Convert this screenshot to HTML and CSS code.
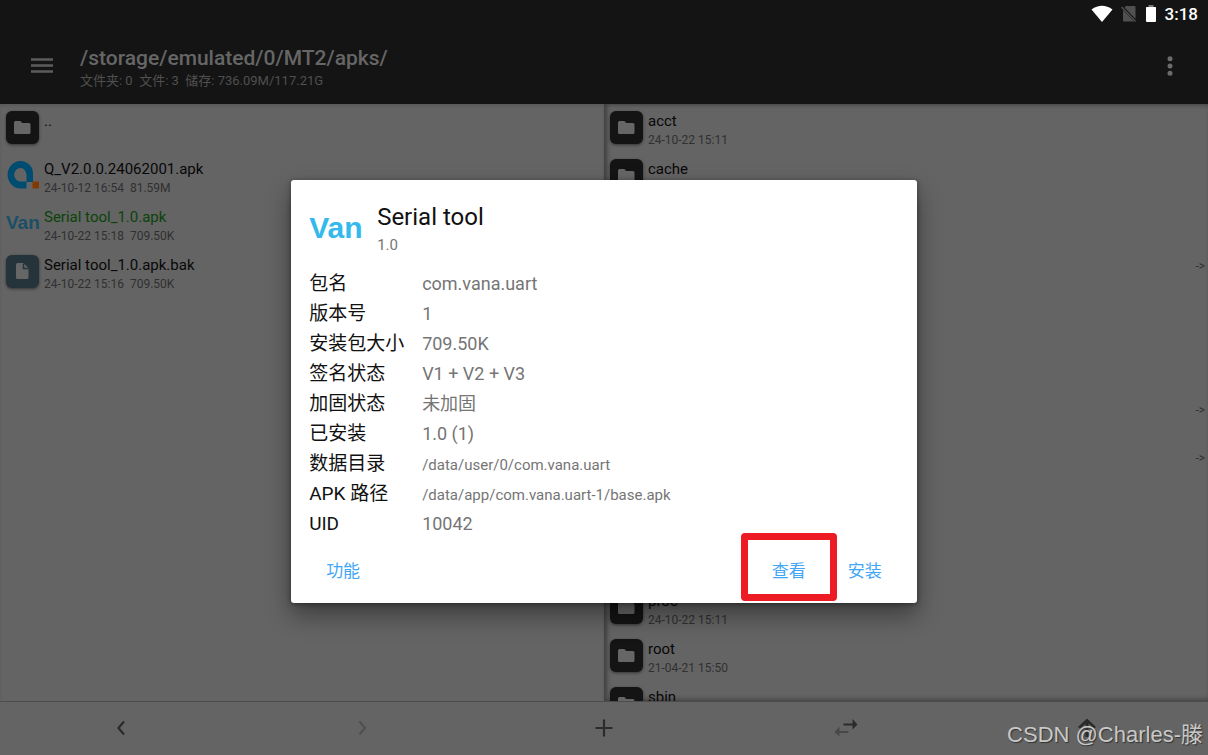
FILE: index.html
```html
<!DOCTYPE html>
<html lang="zh-CN">
<head>
<meta charset="utf-8">
<title>/storage/emulated/0/MT2/apks/</title>
<link rel="stylesheet" href="styles.css">
</head>
<body>
<svg class="defs" width="0" height="0" aria-hidden="true">
  <symbol id="folder" viewBox="0 0 33 33"><path d="M9.500 10h5l1.500 2h7q1.500 0 1.500 1.500v8q0 1.500-1.500 1.500h-13.500q-1.500 0-1.500-1.500v-10q0-1.500 1.500-1.500z" fill="currentColor"/></symbol>
</svg>
<div class="app">
  <header class="top">
    <div class="status">
      <svg width="22" height="18" viewBox="0 0 22 18"><path d="M.500 4.500Q11-3 21.500 4.500L11 17z" fill="#fff"/></svg>
      <svg width="16" height="18" viewBox="0 0 16 18"><path d="M5 1h8.500q1 0 1 1v12L3.500 2.500zM2 5l11 11.500H3q-1 0-1-1z" fill="#505050"/><path d="M.500 2l14 14.500" stroke="#505050" stroke-width="1.500"/></svg>
      <svg width="12" height="18" viewBox="0 0 12 18"><path d="M3.500 0h5v2h-5z" fill="#777"/><path d="M1.500 2h9q.500 0 .500.500V16q0 1-1 1H2q-1 0-1-1V2.500q0-.500.500-.500z" fill="#fff"/></svg>
      <time>3:18</time>
    </div>
    <div class="toolbar">
      <button class="icon-btn" aria-label="菜单"><svg width="24" height="18" viewBox="0 0 24 18"><path d="M1 2.500h22M1 8.500h22M1 14.500h22" stroke="#5c5c5c" stroke-width="2.300"/></svg></button>
      <div class="heading">
        <h1>/storage/emulated/0/MT2/apks/</h1>
        <p>文件夹: 0&nbsp; 文件: 3&nbsp; 储存: 736.09M/117.21G</p>
      </div>
      <button class="icon-btn" aria-label="更多"><svg width="6" height="20" viewBox="0 0 6 20"><g fill="#6b6b6b"><circle cx="3" cy="2.700" r="2.500"/><circle cx="3" cy="10" r="2.500"/><circle cx="3" cy="17.300" r="2.500"/></g></svg></button>
    </div>
  </header>

  <main class="panes">
    <ul class="pane">
      <li class="row"><svg class="tile"><use href="#folder"/></svg><div class="file"><span class="name">..</span></div></li>
      <li class="row"><svg class="logo" viewBox="0 1 33 33"><path fill-rule="evenodd" d="M14.500 3A12.500 13.300 0 0 0 14.500 30.500H20.500V24H27V16A12.500 12.500 0 0 0 14.500 3zM14.500 10a6.200 6.800 0 0 1 6 7v6.500h-6A6.200 6.600 0 0 1 14.500 10z" fill="#004c70"/><path d="M26.500 23.500h6.500v7h-6.500z" fill="#803a00"/></svg><div class="file"><span class="name">Q_V2.0.0.24062001.apk</span><span class="meta">24-10-12 16:54&nbsp; 81.59M</span></div></li>
      <li class="row"><span class="van">Van</span><div class="file"><span class="name installed">Serial tool_1.0.apk</span><span class="meta">24-10-22 15:18&nbsp; 709.50K</span></div></li>
      <li class="row"><svg class="tile doc" viewBox="0 0 33 33"><path d="M11.500 8h6l5 5v9.500q0 1.500-1.500 1.500h-9.500q-1.500 0-1.500-1.500v-13q0-1.500 1.500-1.500z" fill="#666"/><path d="M17.500 8.500v5h5" fill="none" stroke="#25333a" stroke-width="1.500"/></svg><div class="file"><span class="name">Serial tool_1.0.apk.bak</span><span class="meta">24-10-22 15:16&nbsp; 709.50K</span></div></li>
    </ul>
    <ul class="pane pane-front">
      <li class="row"><svg class="tile"><use href="#folder"/></svg><div class="file"><span class="name">acct</span><span class="meta">24-10-22 15:11</span></div></li>
      <li class="row"><svg class="tile"><use href="#folder"/></svg><div class="file"><span class="name">cache</span></div></li>
      <li class="row"></li>
      <li class="row link"><span>-&gt;</span></li>
      <li class="row"></li>
      <li class="row"></li>
      <li class="row link"><span>-&gt;</span></li>
      <li class="row link"><span>-&gt;</span></li>
      <li class="row"></li>
      <li class="row"></li>
      <li class="row"><svg class="tile"><use href="#folder"/></svg><div class="file"><span class="name">proc</span><span class="meta">24-10-22 15:11</span></div></li>
      <li class="row"><svg class="tile"><use href="#folder"/></svg><div class="file"><span class="name">root</span><span class="meta">21-04-21 15:50</span></div></li>
      <li class="row"><svg class="tile"><use href="#folder"/></svg><div class="file"><span class="name">sbin</span></div></li>
    </ul>
  </main>

  <nav class="bottom">
    <button aria-label="后退"><svg viewBox="0 0 24 24"><path d="M15 5.500L9.500 12l5.500 6.500" fill="none" stroke="#2b2b2b" stroke-width="2.200"/></svg></button>
    <button aria-label="前进"><svg viewBox="0 0 24 24"><path d="M9.500 5.500L15 12l-5.500 6.500" fill="none" stroke="#505050" stroke-width="2.200"/></svg></button>
    <button aria-label="新建"><svg viewBox="0 0 24 24"><path d="M12 3.500v17M3.500 12h17" stroke="#2b2b2b" stroke-width="2.200"/></svg></button>
    <button aria-label="交换"><svg viewBox="0 0 24 24"><path d="M9.500 7.500h9V3l5 5.500-5 5V9.500h-9z" fill="#2b2b2b"/><path d="M14.500 15h-9v-4.500L.500 16l5 4.500V17h9z" fill="#484848"/></svg></button>
    <button aria-label="上级"><svg viewBox="0 0 24 24"><path d="M12 2.500l9 8.500-2 1.500-5.500-5V21h-3V8L5 12.500 3 11z" fill="#2b2b2b"/></svg></button>
  </nav>

  <div class="overlay">
    <section class="dialog" role="dialog" aria-labelledby="app-name">
      <header class="dialog-head">
        <span class="van van-large">Van</span>
        <div><h2 id="app-name">Serial tool</h2><p>1.0</p></div>
      </header>
      <table>
        <tr><th scope="row">包名</th><td>com.vana.uart</td></tr>
        <tr><th scope="row">版本号</th><td>1</td></tr>
        <tr><th scope="row">安装包大小</th><td>709.50K</td></tr>
        <tr><th scope="row">签名状态</th><td>V1 + V2 + V3</td></tr>
        <tr><th scope="row">加固状态</th><td>未加固</td></tr>
        <tr><th scope="row">已安装</th><td>1.0 (1)</td></tr>
        <tr><th scope="row">数据目录</th><td class="path">/data/user/0/com.vana.uart</td></tr>
        <tr><th scope="row">APK 路径</th><td class="path">/data/app/com.vana.uart-1/base.apk</td></tr>
        <tr><th scope="row">UID</th><td>10042</td></tr>
      </table>
      <footer class="actions">
        <button class="first">功能</button>
        <button class="marked">查看</button>
        <button>安装</button>
      </footer>
    </section>
  </div>
  <div class="watermark">CSDN @Charles-滕</div>
</div>
</body>
</html>
```
FILE: styles.css
```css
* { box-sizing: border-box; margin: 0; padding: 0; }
body { font-family: Roboto, "Noto Sans CJK SC", sans-serif; background: #646464; color: #080808; }
button { border: 0; background: none; font: inherit; color: inherit; }
svg { display: block; flex: none; }
ul { list-style: none; }
.defs { position: absolute; }
.app { position: relative; height: 100vh; display: flex; flex-direction: column; overflow: hidden; }

.top { background: #141414; }
.status { height: 28px; padding: 0 10px; display: flex; align-items: center; justify-content: flex-end; gap: 8px; color: #fff; }
.status time { font-size: 17px; font-weight: 500; line-height: 30px; }
.toolbar { height: 76px; padding: 0 26px 0 18px; display: flex; align-items: center; }
.icon-btn { width: 48px; height: 48px; display: flex; align-items: center; justify-content: center; }
.icon-btn:last-child { width: 24px; }
.heading { flex: 1; padding: 4px 0 0 14px; }
.heading h1 { font-size: 21px; font-weight: 500; line-height: 26px; color: #666; }
.heading p { font-size: 13px; line-height: 20px; color: #505050; }

.panes { flex: 1; min-height: 0; display: grid; grid-template-columns: 1fr 1fr; }
.pane { min-height: 0; overflow: hidden; box-shadow: inset 0 2px 2px #5a5a5a; }
.pane-front { box-shadow: inset 4px 2px 4px -1px #404040, inset 0 -4px 4px -2px #454545; }
.row { height: 48px; padding: 0 6px 2px; display: flex; align-items: center; gap: 5px; }
.tile, .logo { width: 33px; height: 33px; }
.tile { border-radius: 6px; background: #141414; color: #666; box-shadow: 0 1px 3px #333; }
.tile.doc { background: #25333a; }
.file { align-self: flex-start; padding-top: 6px; display: flex; flex-direction: column; }
.name { font-size: 15px; line-height: 22px; }
.meta { font-size: 12px; line-height: 16px; color: #303030; }
.installed { color: #0b430b; }
.link { padding: 0 3px 12px; justify-content: flex-end; font-size: 12px; color: #303030; }
.van { width: 33px; font-family: "Liberation Sans", sans-serif; font-size: 19px; font-weight: bold; line-height: 24px; color: #1a4f66; }

.bottom { height: 54px; padding-bottom: 2px; display: grid; grid-template-columns: repeat(5, 1fr); border-top: 1px solid #4c4c4c; }
.bottom button { display: flex; align-items: center; justify-content: center; }
.bottom svg { width: 24px; height: 24px; }

.overlay { position: absolute; inset: 28px 0 0; display: flex; align-items: center; justify-content: center; }
.dialog { width: 51.8%; min-width: 480px; padding: 20px 18px 10px; border-radius: 3px; background: #fff; color: #111; box-shadow: 0 12px 24px rgba(0, 0, 0, .4), 0 1px 5px rgba(0, 0, 0, .4); }
.dialog-head { display: flex; align-items: center; gap: 14px; padding-bottom: 13px; }
.van-large { width: 54px; font-size: 30px; color: #33b9ec; }
.dialog-head h2 { font-size: 24px; font-weight: 400; line-height: 34px; }
.dialog-head p { font-size: 15px; line-height: 22px; color: #757575; }
table { border-collapse: collapse; }
tr { height: 30px; }
th, td { line-height: 22px; text-align: left; vertical-align: middle; font-weight: 400; }
th { min-width: 113px; width: 113px; font-size: 19px; white-space: nowrap; }
td { font-size: 18px; color: #757575; }
td.path { padding-top: 2px; font-size: 15px; }
.actions { padding-top: 6px; display: flex; gap: 8px; }
.actions button { position: relative; height: 48px; padding: 0 17px; font-size: 17px; color: #42a5f5; }
.actions .first { margin-right: auto; }
.marked::after { content: ""; position: absolute; inset: -12px -14px -8px -14px; border: 7px solid #ed1c24; border-radius: 4px; }

.watermark { position: absolute; right: 5px; bottom: 4px; font-family: "Liberation Sans", "Noto Sans CJK SC", sans-serif; font-size: 22px; line-height: 32px; color: #c8c8c8; text-shadow: 1px 1px 1px #333; }
```
